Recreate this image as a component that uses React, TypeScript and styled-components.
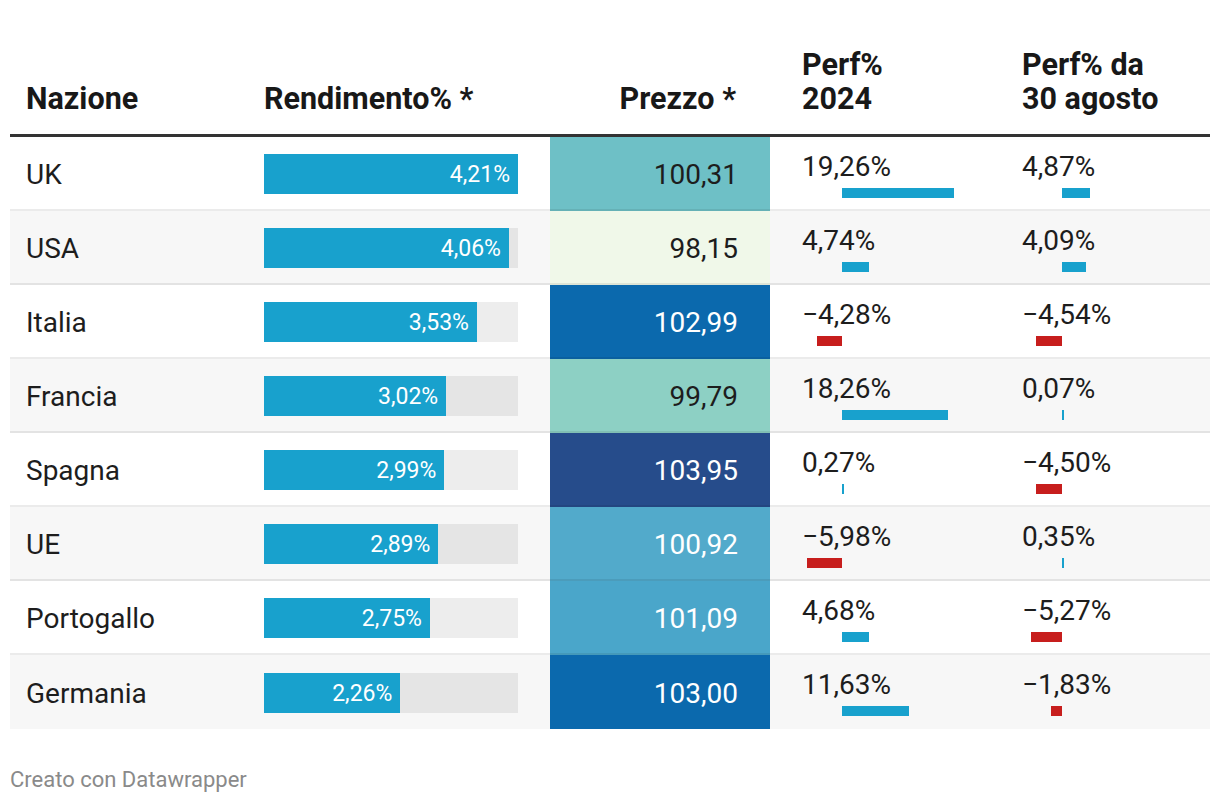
import styled, { createGlobalStyle } from "styled-components";

const GlobalStyle = createGlobalStyle`
    html, body {
        margin: 0;
        padding: 0;
        background: #ffffff;
    }
    body {
        font-family: Roboto, "Liberation Sans", sans-serif;
        color: #1d1d1d;
    }
`

const rows = [
    { country: "UK", yieldPct: 4.21, price: "100,31", priceBg: "#6ec0c6", priceDark: false, perfYear: 19.26, perfAug: 4.87 },
    { country: "USA", yieldPct: 4.06, price: "98,15", priceBg: "#f0f8e9", priceDark: false, perfYear: 4.74, perfAug: 4.09 },
    { country: "Italia", yieldPct: 3.53, price: "102,99", priceBg: "#0b69ad", priceDark: true, perfYear: -4.28, perfAug: -4.54 },
    { country: "Francia", yieldPct: 3.02, price: "99,79", priceBg: "#8dd0c4", priceDark: false, perfYear: 18.26, perfAug: 0.07 },
    { country: "Spagna", yieldPct: 2.99, price: "103,95", priceBg: "#264c8b", priceDark: true, perfYear: 0.27, perfAug: -4.50 },
    { country: "UE", yieldPct: 2.89, price: "100,92", priceBg: "#52aacb", priceDark: true, perfYear: -5.98, perfAug: 0.35 },
    { country: "Portogallo", yieldPct: 2.75, price: "101,09", priceBg: "#4aa6ca", priceDark: true, perfYear: 4.68, perfAug: -5.27 },
    { country: "Germania", yieldPct: 2.26, price: "103,00", priceBg: "#0b69ad", priceDark: true, perfYear: 11.63, perfAug: -1.83 },
]

const MAX_YIELD = 4.21
const PX_PER_PCT = 5.8

const fmt = (n: number) => `${n < 0 ? "\u2212" : ""}${Math.abs(n).toFixed(2).replace(".", ",")}%`

function PerfCell(props: { value: number }) {
    const w = Math.max(2, Math.abs(props.value) * PX_PER_PCT)
    return (
        <PerfWrap>
            <PerfValue>{fmt(props.value)}</PerfValue>
            <PerfAxis>
                <NegSide>{props.value < 0 && <PerfBar $negative style={{ width: w }} />}</NegSide>
                <PosSide>{props.value >= 0 && <PerfBar style={{ width: w }} />}</PosSide>
            </PerfAxis>
        </PerfWrap>
    )
}

export default function App() {
    return (
        <Page>
            <GlobalStyle />
            <Table>
                <HeaderRow>
                    <HeadCell>Nazione</HeadCell>
                    <HeadCell>Rendimento% *</HeadCell>
                    <HeadCell $right>Prezzo *</HeadCell>
                    <HeadCell $wide>Perf%<br />2024</HeadCell>
                    <HeadCell $wide>Perf% da<br />30 agosto</HeadCell>
                </HeaderRow>
                {rows.map((r, i) => (
                    <Row key={r.country} $striped={i % 2 === 1}>
                        <NameCell>{r.country}</NameCell>
                        <YieldCell>
                            <YieldTrack>
                                <YieldBar style={{ width: `${(r.yieldPct / MAX_YIELD) * 100}%` }}>
                                    {fmt(r.yieldPct)}
                                </YieldBar>
                            </YieldTrack>
                        </YieldCell>
                        <PriceCell $bg={r.priceBg} $dark={r.priceDark}>{r.price}</PriceCell>
                        <PerfCol><PerfCell value={r.perfYear} /></PerfCol>
                        <PerfCol><PerfCell value={r.perfAug} /></PerfCol>
                    </Row>
                ))}
            </Table>
            <Footer>Creato con Datawrapper</Footer>
        </Page>
    )
}

const Page = styled.div`
    width: 1200px;
    padding: 40px 10px 0;
`

const Table = styled.div`
    display: flex;
    flex-direction: column;
`

const columns = `238px 302px 220px 220px 220px`

const HeaderRow = styled.div`
    display: grid;
    grid-template-columns: ${columns};
    align-items: end;
    border-bottom: 3px solid #333333;
`

const HeadCell = styled.div<{ $right?: boolean, $wide?: boolean }>`
    font-size: 30.5px;
    font-weight: 700;
    line-height: 34px;
    color: #181818;
    padding: 8px ${p => p.$right ? "34px" : "16px"} 18px ${p => p.$wide ? "32px" : "16px"};
    text-align: ${p => p.$right ? "right" : "left"};
`

const Row = styled.div<{ $striped: boolean }>`
    display: grid;
    grid-template-columns: ${columns};
    height: 74px;
    background: ${p => p.$striped ? "#f7f7f7" : "#ffffff"};
    font-size: 28px;

    & > div {
        box-sizing: border-box;
        border-bottom: 2px solid rgba(0, 0, 0, 0.08);
    }
    &:last-child > div {
        border-bottom: none;
    }
`

const NameCell = styled.div`
    display: flex;
    align-items: center;
    padding: 3px 0 0 16px;
`

const YieldCell = styled.div`
    display: flex;
    align-items: center;
    padding: 2px 0 0 16px;
`

const YieldTrack = styled.div`
    width: 254px;
    height: 40px;
    background: rgba(0, 0, 0, 0.07);
    display: flex;
`

const YieldBar = styled.div`
    height: 100%;
    background: #18a1cd;
    color: #ffffff;
    font-size: 23px;
    display: flex;
    align-items: center;
    justify-content: flex-end;
    padding-right: 8px;
    box-sizing: border-box;
`

const PriceCell = styled.div<{ $bg: string, $dark: boolean }>`
    display: flex;
    align-items: center;
    justify-content: flex-end;
    padding: 3px 32px 0 0;
    background: ${p => p.$bg};
    color: ${p => p.$dark ? "#ffffff" : "#1d1d1d"};
`

const PerfCol = styled.div`
    padding: 14px 0 0 32px;
`

const PerfWrap = styled.div`
    display: flex;
    flex-direction: column;
`

const PerfValue = styled.div`
    line-height: 31px;
`

const PerfAxis = styled.div`
    display: flex;
    margin-top: 6px;
    height: 10px;
`

const NegSide = styled.div`
    width: 40px;
    display: flex;
    justify-content: flex-end;
`

const PosSide = styled.div`
    flex: 1;
    display: flex;
`

const PerfBar = styled.div<{ $negative?: boolean }>`
    height: 10px;
    background: ${p => p.$negative ? "#c71e1d" : "#18a1cd"};
`

const Footer = styled.div`
    margin-top: 38px;
    font-size: 22px;
    color: #8a8a8a;
`
